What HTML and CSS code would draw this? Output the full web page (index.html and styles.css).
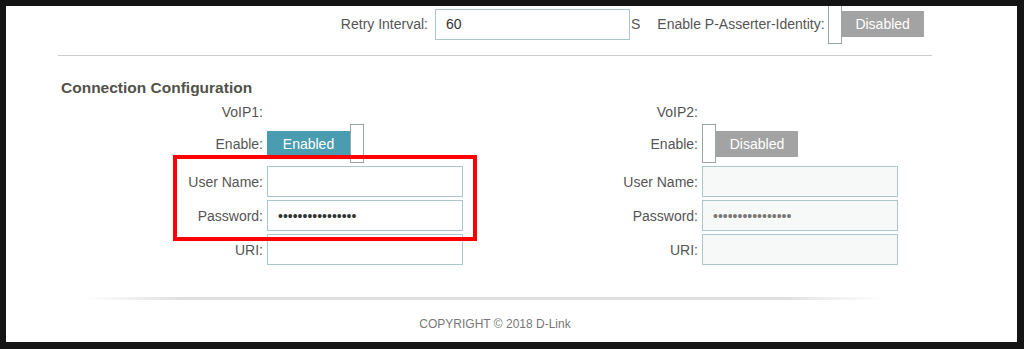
FILE: index.html
```html
<!DOCTYPE html>
<html lang="en">
<head>
    <meta charset="UTF-8">
    <meta name="viewport" content="width=device-width, initial-scale=1.0">
    <title>VoIP Settings</title>
    <link rel="stylesheet" href="styles.css">
</head>
<body>
    <div class="screen">
        <div class="top-row">
            <span class="top-label">Retry Interval:</span>
            <input type="text" class="top-input" value="60">
            <span class="unit">S</span>
            <span class="assert-label">Enable P-Asserter-Identity:</span>
            <div class="toggle off">
                <span class="knob"></span>
                <span class="state">Disabled</span>
            </div>
        </div>

        <div class="divider"></div>

        <h2>Connection Configuration</h2>

        <div class="columns">
            <div class="column">
                <div class="field head"><label>VoIP1:</label></div>
                <div class="field switch-row">
                    <label>Enable:</label>
                    <div class="toggle on">
                        <span class="state">Enabled</span>
                        <span class="knob"></span>
                    </div>
                </div>
                <div class="field">
                    <label>User Name:</label>
                    <input type="text">
                </div>
                <div class="field">
                    <label>Password:</label>
                    <input type="password" value="0123456789abcdef">
                </div>
                <div class="field">
                    <label>URI:</label>
                    <input type="text">
                </div>
            </div>

            <div class="column">
                <div class="field head"><label>VoIP2:</label></div>
                <div class="field switch-row">
                    <label>Enable:</label>
                    <div class="toggle off">
                        <span class="knob"></span>
                        <span class="state">Disabled</span>
                    </div>
                </div>
                <div class="field">
                    <label>User Name:</label>
                    <input type="text" disabled>
                </div>
                <div class="field">
                    <label>Password:</label>
                    <input type="password" value="0123456789abcdef" disabled>
                </div>
                <div class="field">
                    <label>URI:</label>
                    <input type="text" disabled>
                </div>
            </div>
        </div>

        <div class="footer-line"></div>
        <div class="copyright">COPYRIGHT &copy; 2018 D-Link</div>

        <!-- highlight annotation -->
        <div class="highlight"></div>
    </div>
</body>
</html>
```

FILE: styles.css
```css
body {
    margin: 0;
    height: 349px;
    background-color: #141414;
    font-family: "Liberation Sans", Arial, sans-serif;
    font-size: 14px;
    color: #555;
    overflow: hidden;
}
.screen {
    position: relative;
    margin: 6px 7px 0 6px;
    height: 336px;
    background-color: #fff;
    overflow: hidden;
}
.top-row {
    display: flex;
    align-items: center;
    height: 40px;
    margin-top: -2px;
    padding-left: 272px;
}
.top-label {
    width: 150px;
    text-align: right;
    margin-right: 7px;
}
input {
    box-sizing: border-box;
    height: 31px;
    width: 196px;
    padding: 0 10px;
    border: 1px solid #a9c7cc;
    background-color: #fff;
    font-family: "Liberation Sans", Arial, sans-serif;
    font-size: 14px;
    color: #333;
    outline: none;
}
input:disabled {
    background-color: #f7f8f8;
    color: #777;
}
.top-input {
    width: 195px;
}
.unit {
    margin-left: 1px;
}
.assert-label {
    margin-left: 17px;
    margin-right: 3px;
}
.toggle {
    display: flex;
    align-items: center;
    height: 39px;
}
.knob {
    box-sizing: border-box;
    width: 14px;
    height: 39px;
    background-color: #fff;
    border: 1px solid #9aa5a8;
}
.state {
    width: 83px;
    height: 26px;
    line-height: 26px;
    text-align: center;
    color: #fff;
}
.on .state {
    background-color: #4a9cb1;
}
.off .state {
    width: 82px;
    background-color: #a3a3a3;
}
.divider {
    margin: 11px 0 0 52px;
    width: 874px;
    border-top: 1px solid #cbcbcb;
}
h2 {
    margin: 23px 0 3px 55px;
    font-size: 15.5px;
    line-height: 18px;
    font-weight: bold;
    color: #52524a;
}
.columns {
    display: flex;
    margin-left: 52px;
}
.column {
    width: 435px;
}
.field {
    display: flex;
    align-items: center;
    height: 31px;
    margin-bottom: 3px;
}
.field label {
    width: 205px;
    margin-right: 4px;
    text-align: right;
}
.field.head {
    height: 24px;
    margin-bottom: 0;
}
.field.switch-row {
    height: 39px;
}
.footer-line {
    margin: 29px 0 0 79px;
    width: 796px;
    height: 3px;
    background: linear-gradient(to right, rgba(220,220,220,0), #e0e0e0 12%, #e0e0e0 88%, rgba(220,220,220,0));
}
.copyright {
    margin: 17px 0 0 79px;
    width: 772px;
    padding-left: 24px;
    text-align: center;
    font-size: 12px;
    line-height: 14px;
    color: #777;
}
.highlight {
    position: absolute;
    left: 167px;
    top: 149px;
    width: 304px;
    height: 86px;
    box-sizing: border-box;
    border: 4px solid #f00;
}
```
